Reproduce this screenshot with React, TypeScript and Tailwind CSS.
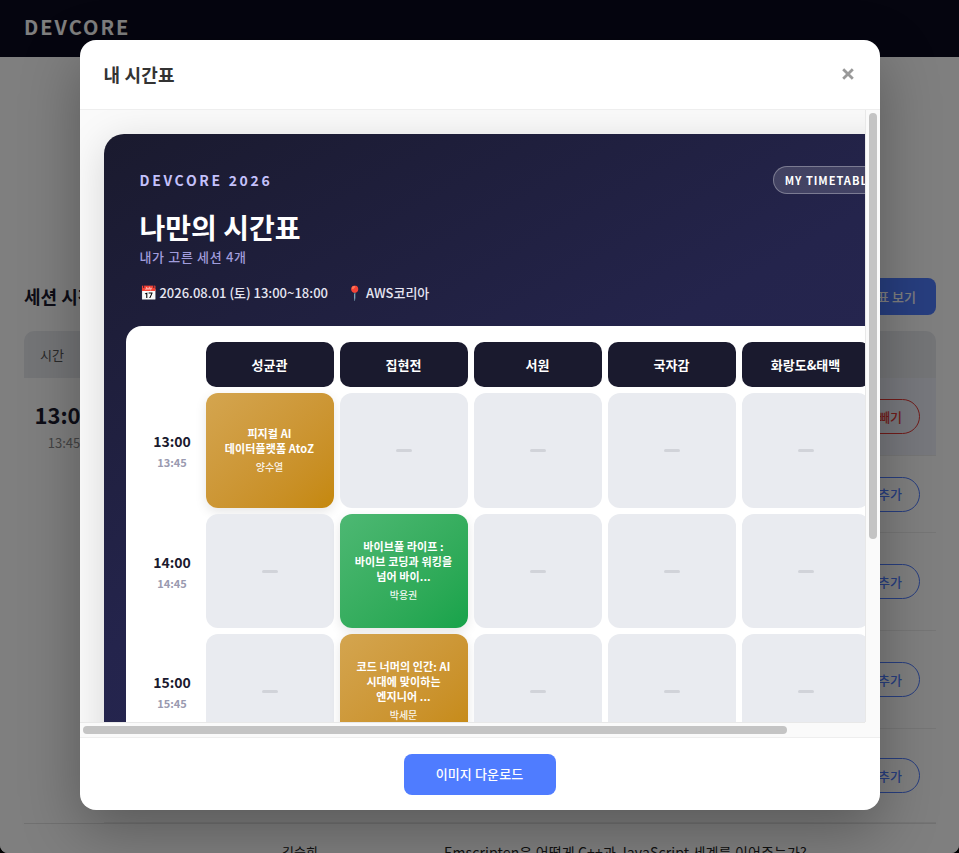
import React from "react";

const rooms = ["성균관", "집현전", "서원", "국자감", "화랑도&태백"];

type Session = { col: number; lines: string[]; speaker: string; tone: "amber" | "green" };

const rows: { start: string; end: string; session?: Session }[] = [
  { start: "13:00", end: "13:45", session: { col: 0, lines: ["피지컬 AI", "데이터플랫폼 AtoZ"], speaker: "양수열", tone: "amber" } },
  { start: "14:00", end: "14:45", session: { col: 1, lines: ["바이브풀 라이프 :", "바이브 코딩과 워킹을", "넘어 바이..."], speaker: "박용권", tone: "green" } },
  { start: "15:00", end: "15:45", session: { col: 1, lines: ["코드 너머의 인간: AI", "시대에 맞이하는", "엔지니어 ..."], speaker: "박세문", tone: "amber" } },
  { start: "16:00", end: "16:45", session: { col: 2, lines: ["Emscripten은 어떻게", "C++과 JavaScript", "세계를 이어..."], speaker: "김승희", tone: "green" } },
];

function Grid() {
  return (
    <div className="grid grid-cols-[58px_repeat(5,128px)] grid-rows-[45px_115px_114px_114px_114px] gap-[6px]">
      <div />
      {rooms.map((r) => (
        <div key={r} className="rounded-[10px] bg-[#1a1a2e] text-white text-[13px] font-bold flex items-center justify-center">
          {r}
        </div>
      ))}
      {rows.map((row) => (
        <React.Fragment key={row.start}>
          <div className="flex flex-col items-center justify-center gap-[3px] pl-[3px]">
            <span className="text-[14px] leading-[20px] font-bold text-[#1a1a2e]">{row.start}</span>
            <span className="text-[11px] leading-[16px] font-bold text-[#9a9ab0]">{row.end}</span>
          </div>
          {rooms.map((_, i) =>
            row.session && row.session.col === i ? (
              <div
                key={i}
                className={
                  row.session.tone === "amber"
                    ? "rounded-[12px] pb-[2px] bg-gradient-to-br from-[#d4a54f] to-[#c5880a] shadow-[0_4px_12px_rgba(0,0,0,0.1)] flex flex-col items-center justify-center text-white text-center"
                    : "rounded-[12px] pb-[2px] bg-gradient-to-br from-[#4db873] to-[#16a34a] shadow-[0_4px_12px_rgba(0,0,0,0.1)] flex flex-col items-center justify-center text-white text-center"
                }
              >
                <div className="text-[11px] leading-[15px] font-bold tracking-[0.01em]">
                  {row.session.lines.map((l) => (
                    <div key={l}>{l}</div>
                  ))}
                </div>
                <div className="mt-1 text-[10px] leading-[14px] font-medium opacity-90">{row.session.speaker}</div>
              </div>
            ) : (
              <div key={i} className="rounded-[12px] bg-[#e9ebf0] flex items-center justify-center">
                <div className="w-4 h-[3px] rounded-sm bg-[#d1d3d9]" />
              </div>
            )
          )}
        </React.Fragment>
      ))}
    </div>
  );
}

function PageRow({ h, label, tone, tint }: { h: string; label: string; tone: "red" | "blue"; tint?: boolean }) {
  return (
    <div className={`${h} ${tint ? "bg-[#eef1fb]" : "bg-white"} border-b border-[#ececec] flex items-center justify-end pr-4`}>
      <button
        className={
          tone === "red"
            ? "h-[35px] px-[17px] rounded-full border border-[#e53935] text-[#e53935] text-[13px] font-medium"
            : "h-[35px] px-[17px] rounded-full border border-[#4f7cff] text-[#4f7cff] text-[13px] font-medium"
        }
      >
        {label}
      </button>
    </div>
  );
}

export default function App() {
  return (
    <div className="h-[853px] bg-black overflow-hidden [font-family:'Noto_Sans_CJK_KR','Noto_Sans',sans-serif]">
      <div className="relative h-[853px] overflow-hidden rounded-b-[8px] bg-white">
        <header className="h-[57px] bg-[#0a0a1e] flex items-center px-6 pb-1">
          <span className="text-white text-[20px] font-bold tracking-[0.1em]">DEVCORE</span>
        </header>

        <main className="pl-6 pr-[23px] pt-[221px]">
          <div className="flex items-center justify-between h-[37px]">
            <h2 className="text-[18px] font-bold text-[#1a1a2e]">세션 시간표</h2>
            <button className="h-[37px] px-5 rounded-[8px] bg-[#4f7cff] text-white text-[13px] font-medium">내 시간표 보기</button>
          </div>
          <div className="mt-4 h-[47px] rounded-t-[10px] bg-[#e8eaef] flex items-center px-4 text-[13px] text-[#555]">시간</div>
          <div className="grid grid-cols-[80px_1fr] border-b border-[#e2e2e2]">
            <div className="flex flex-col items-center pt-[22px]">
              <span className="text-[22px] leading-[28px] font-bold text-[#1a1a2e]">13:00</span>
              <span className="mt-[6px] text-[13px] leading-[18px] text-[#888]">13:45</span>
            </div>
            <div>
              <PageRow h="h-[78px]" label="시간표 빼기" tone="red" tint />
              <PageRow h="h-[77px]" label="시간표 추가" tone="blue" />
              <PageRow h="h-[98px]" label="시간표 추가" tone="blue" />
              <PageRow h="h-[98px]" label="시간표 추가" tone="blue" />
              <PageRow h="h-[94px]" label="시간표 추가" tone="blue" />
            </div>
          </div>
          <div className="ml-[80px] bg-white h-[60px] flex pt-4 text-[#222]">
            <span className="ml-[178px] w-[162px] text-[13px] leading-[24px]">김승희</span>
            <span className="text-[14px] leading-[24px] tracking-[0.01em] whitespace-nowrap">Emscripten은 어떻게 C++과 JavaScript 세계를 이어주는가?</span>
          </div>
        </main>

        {/* overlay + modal */}
        <div className="absolute inset-0 bg-black/50 flex items-start justify-center pt-10">
          <div className="w-[800px] h-[770px] rounded-[16px] bg-white shadow-[0_20px_60px_rgba(0,0,0,0.3)] flex flex-col overflow-hidden">
            <div className="h-[70px] shrink-0 border-b border-[#eeeeee] flex items-center justify-between pl-6 pr-[26px]">
              <h3 className="text-[18px] font-bold text-[#333] tracking-[0.01em]">내 시간표</h3>
              <svg width="12" height="12" viewBox="0 0 12 12" className="-mt-[2px]">
                <path d="M1.2 1.2L10.8 10.8M10.8 1.2L1.2 10.8" stroke="#999" strokeWidth="2.8" />
              </svg>
            </div>

            <div className="flex-1 min-h-0 grid grid-cols-[1fr_15px] grid-rows-[1fr_15px] bg-[#fafafa]">
              <div className="overflow-hidden p-6 min-w-0 min-h-0">
                <div className="w-[820px] h-[819px] rounded-[20px] bg-[linear-gradient(150deg,#1a1a2e_0%,#24244c_40%,#2a2a5a_100%)] shadow-[0_8px_40px_rgba(0,0,0,0.15)] flex flex-col">
                  <div className="h-[192px] shrink-0 px-9 pt-8">
                    <div className="flex items-center justify-between h-7">
                      <span className="text-[14px] font-bold tracking-[0.19em] text-[#c4c1fb]">DEVCORE 2026</span>
                      <span className="h-7 px-[11px] rounded-full bg-white/15 border border-white/30 text-white text-[11px] font-bold tracking-[0.09em] flex items-center">
                        MY TIMETABLE
                      </span>
                    </div>
                    <h1 className="mt-[14px] text-[28px] leading-[38px] font-bold text-white">나만의 시간표</h1>
                    <p className="mt-[2px] text-[13px] leading-[18px] font-medium tracking-[0.05em] text-[#a09cdc]">내가 고른 세션 4개</p>
                    <div className="mt-[16px] flex items-center gap-[18px] text-[13px] leading-[20px] font-medium text-[#e6e6f2]">
                      <span><span className="text-[14px]">📅</span> 2026.08.01 (토) 13:00~18:00</span>
                      <span><span className="text-[14px]">📍</span> AWS코리아</span>
                    </div>
                  </div>
                  <div className="flex-1 mx-[22px] mb-[22px] rounded-[16px] bg-white p-4">
                    <Grid />
                  </div>
                </div>
              </div>
              {/* vertical scrollbar */}
              <div className="border-l border-[#e8e8e8] pl-[3px] pt-[3px]">
                <div className="w-2 h-[426px] rounded-full bg-[#c4c4c4]" />
              </div>
              {/* horizontal scrollbar */}
              <div className="border-t border-[#e8e8e8] pl-[3px] pt-[3px]">
                <div className="h-2 w-[704px] rounded-full bg-[#c4c4c4]" />
              </div>
              <div />
            </div>

            <div className="h-[73px] shrink-0 border-t border-[#eeeeee] flex items-center justify-center">
              <button className="w-[152px] h-[41px] rounded-[8px] bg-[#4f7cff] text-white text-[13px] font-medium tracking-[0.01em]">이미지 다운로드</button>
            </div>
          </div>
        </div>
      </div>
    </div>
  );
}
